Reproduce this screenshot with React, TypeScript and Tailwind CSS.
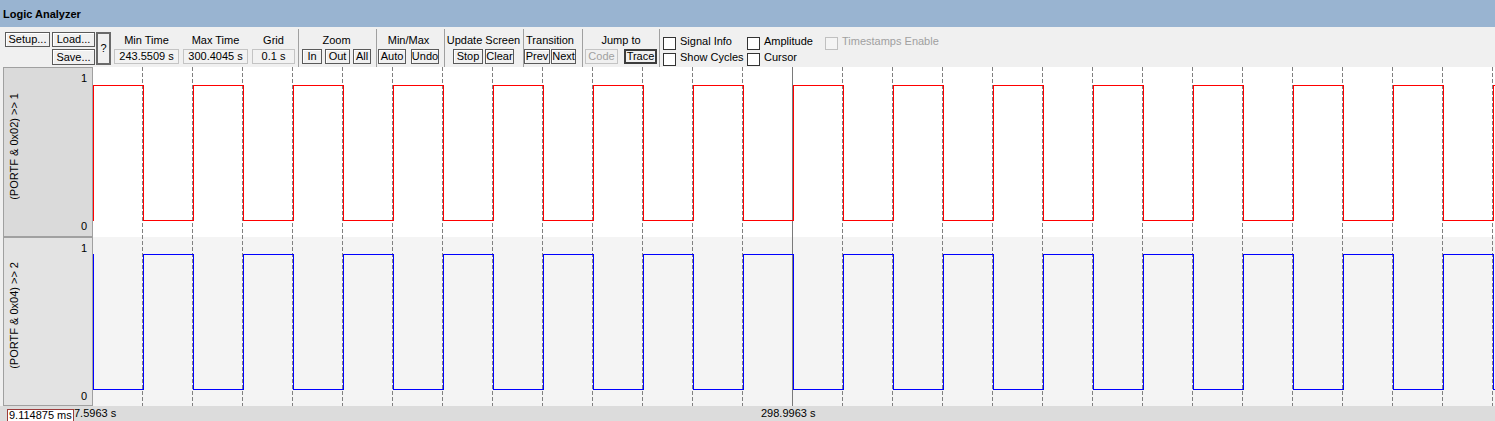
import React from "react";

const PLOT_W = 1402;
const PLOT_H = 339;

type Seg = { x: number; y: number; w: number; h: number };

function wave(startHigh: boolean, top: number, bottom: number): Seg[] {
  // square wave, edges at every 50px, starting with an edge at x=0
  const segs: Seg[] = [];
  let high = startHigh;
  for (let x = 0; x < PLOT_W; x += 50) {
    // vertical edge at x
    segs.push({ x, y: top, w: 1, h: bottom - top + 1 });
    // horizontal level from x to x+50
    segs.push({ x, y: high ? top : bottom, w: 51, h: 1 });
    high = !high;
  }
  return segs;
}

const red = wave(true, 18, 153);
const blue = wave(false, 187, 322);

const dashXs = Array.from({ length: 28 }, (_, k) => 49.5 + 50 * k);

function Btn({ children, className = "" }: { children: React.ReactNode; className?: string }) {
  return (
    <div
      className={`flex items-center justify-center border border-[#5a5a5a] bg-[#f0f0f0] shadow-[inset_1px_1px_0_#ffffff] leading-none whitespace-nowrap ${className}`}
    >
      {children}
    </div>
  );
}

function Sep({ className = "" }: { className?: string }) {
  return <div className={`mt-[2px] h-[38px] w-px bg-[#a0a0a0] shrink-0 ${className}`} />;
}

function Group({
  title,
  className = "",
  children,
}: {
  title: string;
  className?: string;
  children: React.ReactNode;
}) {
  return (
    <div className={`mt-[6px] flex flex-col items-center shrink-0 ${className}`}>
      <div className="h-[15px] leading-[15px] whitespace-nowrap">{title}</div>
      <div className="mt-[1px] flex items-start">{children}</div>
    </div>
  );
}

function ValueBox({ title, value, className = "" }: { title: string; value: string; className?: string }) {
  return (
    <div className={`mt-[6px] flex flex-col items-center shrink-0 ${className}`}>
      <div className="h-[15px] leading-[15px] whitespace-nowrap">{title}</div>
      <div className="mt-[1px] flex h-[15px] w-full items-center justify-center border border-[#c4c4c4] bg-[#f2f2f2] leading-none">
        {value}
      </div>
    </div>
  );
}

function Check({ label, disabled = false }: { label: string; disabled?: boolean }) {
  return (
    <div className="flex h-[16px] items-start whitespace-nowrap">
      <div
        className={`h-[13px] w-[13px] shrink-0 border ${
          disabled ? "border-[#c0c0c0] bg-[#f4f4f4]" : "border-[#333333] bg-white"
        }`}
      />
      <span className={`ml-[4px] -mt-[2px] leading-[13px] ${disabled ? "text-[#a0a0a0]" : ""}`}>{label}</span>
    </div>
  );
}

function LabelPanel({
  name,
  className = "",
  pad = "",
}: {
  name: string;
  className?: string;
  pad?: string;
}) {
  return (
    <div className={`flex border border-[#a0a0a0] ${className}`}>
      <div className="flex w-[16px] items-center justify-end pb-[12px]">
        <div className="[writing-mode:vertical-rl] rotate-180 whitespace-nowrap leading-[12px]">{name}</div>
      </div>
      <div className={`flex flex-1 flex-col items-end justify-between pr-[5px] leading-[13px] ${pad}`}>
        <span>1</span>
        <span>0</span>
      </div>
    </div>
  );
}

export default function App() {
  return (
    <div className="relative flex h-[421px] w-[1495px] flex-col overflow-hidden bg-[#f0f0f0] font-['Liberation_Sans',Arial,sans-serif] text-[11px] text-black">
      {/* Title bar */}
      <div className="flex h-[27px] shrink-0 items-center bg-[#99b4d1] pl-[3px] pt-[1px] font-bold">
        Logic Analyzer
      </div>

      {/* Toolbar */}
      <div className="flex h-[40px] shrink-0 items-start">
        <Btn className="ml-[5px] mt-[5px] h-[15px] w-[45px] shrink-0">Setup...</Btn>
        <div className="ml-[2px] mt-[5px] flex shrink-0 flex-col gap-[2px]">
          <Btn className="h-[15px] w-[43px]">Load...</Btn>
          <Btn className="h-[16px] w-[43px]">Save...</Btn>
        </div>
        <div className="ml-[1px] mt-[5px] flex h-[33px] w-[15px] shrink-0 items-center justify-center border-2 border-[#6a6a6a] bg-[#f0f0f0] leading-none">
          ?
        </div>
        <ValueBox title="Min Time" value="243.5509 s" className="ml-[3px] w-[65px]" />
        <ValueBox title="Max Time" value="300.4045 s" className="ml-[4px] w-[65px]" />
        <ValueBox title="Grid" value="0.1 s" className="ml-[4px] w-[43px]" />
        <Sep className="ml-[3px]" />
        <Group title="Zoom" className="ml-[3px] w-[69px]">
          <Btn className="h-[15px] w-[20px]">In</Btn>
          <Btn className="ml-[3px] h-[15px] w-[25px]">Out</Btn>
          <Btn className="ml-[3px] h-[15px] w-[18px]">All</Btn>
        </Group>
        <Sep className="ml-[5px]" />
        <Group title="Min/Max" className="ml-[1px] w-[61px]">
          <Btn className="h-[15px] w-[28px]">Auto</Btn>
          <Btn className="ml-[5px] h-[15px] w-[28px]">Undo</Btn>
        </Group>
        <Sep className="ml-[5px]" />
        <Group title="Update Screen" className="ml-[3px] w-[71px]">
          <Btn className="h-[15px] w-[30px]">Stop</Btn>
          <Btn className="ml-[2px] h-[15px] w-[29px]">Clear</Btn>
        </Group>
        <Sep className="ml-[4px]" />
        <Group title="Transition" className="w-[52px]">
          <Btn className="h-[15px] w-[26px]">Prev</Btn>
          <Btn className="ml-[1px] h-[15px] w-[25px]">Next</Btn>
        </Group>
        <Sep className="ml-[6px]" />
        <Group title="Jump to" className="ml-[2px] w-[72px]">
          <div className="flex h-[15px] w-[33px] items-center justify-center border border-[#c4c4c4] bg-[#f0f0f0] leading-none text-[#a0a0a0]">
            Code
          </div>
          <div className="ml-[6px] flex h-[15px] w-[33px] items-center justify-center border-2 border-[#3c3c3c] bg-[#f0f0f0] leading-none">
            Trace
          </div>
        </Group>
        <Sep className="ml-[2px]" />
        <div className="ml-[3px] mt-[10px] flex w-[84px] shrink-0 flex-col">
          <Check label="Signal Info" />
          <Check label="Show Cycles" />
        </div>
        <div className="mt-[10px] flex w-[78px] shrink-0 flex-col">
          <Check label="Amplitude" />
          <Check label="Cursor" />
        </div>
        <div className="mt-[10px] flex shrink-0 flex-col">
          <Check label="Timestamps Enable" disabled />
        </div>
      </div>

      {/* Plot area */}
      <div className="flex h-[339px] shrink-0">
        <div className="ml-[3px] flex w-[90px] shrink-0 flex-col">
          <LabelPanel name="(PORTF & 0x02) >> 1" className="h-[170px] bg-[#dadada]" pad="pt-[4px] pb-[3px]" />
          <LabelPanel name="(PORTF & 0x04) >> 2" className="h-[169px] bg-[#e3e3e3]" pad="pt-[4px] pb-[2px]" />
        </div>
        <svg width={PLOT_W} height={PLOT_H} viewBox={`0 0 ${PLOT_W} ${PLOT_H}`} className="block shrink-0">
          <rect x="0" y="0" width={PLOT_W} height="170" fill="#ffffff" />
          <rect x="0" y="170" width={PLOT_W} height="169" fill="#f4f4f4" />
          {dashXs.map((x) => (
            <line key={x} x1={x} y1="0" x2={x} y2={PLOT_H} stroke="#808080" strokeWidth="1" strokeDasharray="4 2" />
          ))}
          <rect x="699" y="0" width="1" height={PLOT_H} fill="#7a7a7a" />
          {red.map((s, i) => (
            <rect key={`r${i}`} x={s.x} y={s.y} width={s.w} height={s.h} fill="#ff0000" />
          ))}
          {blue.map((s, i) => (
            <rect key={`b${i}`} x={s.x} y={s.y} width={s.w} height={s.h} fill="#0000ff" />
          ))}
        </svg>
      </div>

      {/* Bottom status */}
      <div className="relative flex h-[15px] shrink-0 items-start bg-[#dcdcdc]">
        <div className="ml-[7px] mt-[3px] h-[16px] w-[67px] shrink-0 border border-[#9b3b3b] bg-white pl-[1px] leading-[10px]">
          9.114875 ms
        </div>
        <span className="leading-[15px]">7.5963 s</span>
        <span className="absolute left-[761px] top-0 leading-[15px]">298.9963 s</span>
      </div>
    </div>
  );
}
